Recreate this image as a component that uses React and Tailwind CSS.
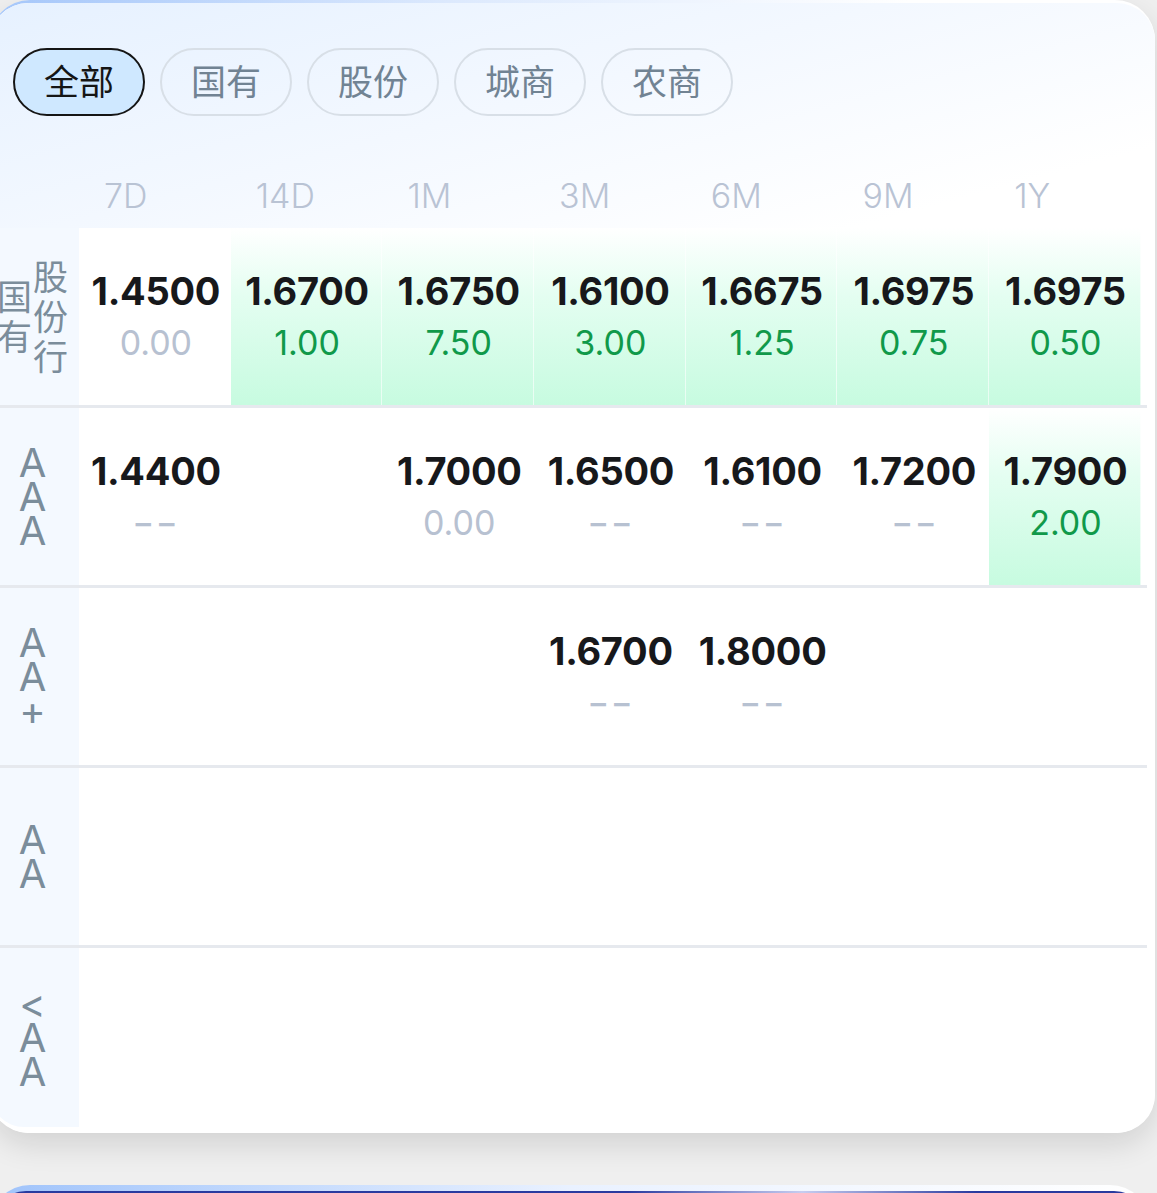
const tabs = ["全部", "国有", "股份", "城商", "农商"];
const periods = ["7D", "14D", "1M", "3M", "6M", "9M", "1Y"];

const rows = [
  {
    label: [["国", "有"], ["股", "份", "行"]],
    cells: [
      { v: "1.4500", d: "0.00" },
      { v: "1.6700", d: "1.00", up: true },
      { v: "1.6750", d: "7.50", up: true },
      { v: "1.6100", d: "3.00", up: true },
      { v: "1.6675", d: "1.25", up: true },
      { v: "1.6975", d: "0.75", up: true },
      { v: "1.6975", d: "0.50", up: true },
    ],
  },
  {
    label: [["A", "A", "A"]],
    cells: [
      { v: "1.4400", d: "--" },
      null,
      { v: "1.7000", d: "0.00" },
      { v: "1.6500", d: "--" },
      { v: "1.6100", d: "--" },
      { v: "1.7200", d: "--" },
      { v: "1.7900", d: "2.00", up: true },
    ],
  },
  {
    label: [["A", "A", "+"]],
    cells: [null, null, null, { v: "1.6700", d: "--" }, { v: "1.8000", d: "--" }, null, null],
  },
  { label: [["A", "A"]], cells: [null, null, null, null, null, null, null] },
  { label: [["<", "A", "A"]], cells: [null, null, null, null, null, null, null] },
];

const cjk = { fontFamily: "Inter, 'Noto Sans CJK SC', sans-serif" };

function RowLabel({ cols, last }) {
  const isCjk = cols.length > 1;
  return (
    <div
      className={
        "flex items-center justify-center bg-[#f4f9ff] pr-[4px] text-[#7b8d9b] " +
        (last ? "rounded-bl-[34px]" : "")
      }
    >
      {cols.map((chars, i) => (
        <div key={i} className="flex w-[36px] flex-col items-center">
          {chars.map((c, j) =>
            isCjk ? (
              <span key={j} className="text-[35px] leading-[40px]" style={cjk}>
                {c}
              </span>
            ) : (
              <span key={j} className="text-[40px] leading-[34px]">
                {c}
              </span>
            )
          )}
        </div>
      ))}
    </div>
  );
}

function Cell({ cell }) {
  if (!cell) return <div />;
  const empty = cell.d === "--";
  const dim = empty || cell.d === "0.00";
  return (
    <div
      className={
        "flex flex-col items-center justify-center pl-[2px] " +
        (cell.up
          ? "border-r border-white/60 bg-[linear-gradient(180deg,#ffffff_0%,#e4fef1_38%,#c7fbe0_100%)]"
          : "")
      }
    >
      <div className="text-[38px] font-bold leading-[48px] tracking-[-0.3px] text-[#17181b]">
        {cell.v}
      </div>
      <div
        className={
          "mt-[4px] text-[34px] leading-[48px] " +
          (dim ? "text-[#b7c1d1]" : "text-[#10994a]")
        }
      >
        {empty ? (
          <span className="inline-block scale-x-[1.4] font-medium tracking-[1px]">--</span>
        ) : (
          cell.d
        )}
      </div>
    </div>
  );
}

const grid = "grid grid-cols-[89px_repeat(7,151.7px)_1fr]";

export default function App() {
  return (
    <div className="min-h-screen overflow-hidden bg-[#efefef]" style={{ fontFamily: "Inter, 'Noto Sans CJK SC', sans-serif" }}>
      <div className="-ml-[10px] w-[1165px] rounded-[40px] bg-[linear-gradient(135deg,#a4c6fa_0%,#dce9fd_20%,#ffffff_40%)] pt-[3px] shadow-[0_12px_30px_rgba(0,0,0,0.12)]">
        <div className="overflow-hidden rounded-[38px] bg-white pb-[6px] pr-[8px]">
          <div className="-mr-[8px] bg-[linear-gradient(165deg,#e6f1ff_0%,#f3f8ff_45%,#ffffff_85%)] pr-[8px]">
            <div className="flex gap-[15px] pl-[23px] pt-[45px]">
              {tabs.map((t, i) => (
                <div
                  key={t}
                  className={
                    "flex h-[68px] w-[132px] items-center justify-center rounded-full text-[35px] " +
                    (i === 0
                      ? "border-[2.5px] border-[#151515] bg-[#cfe8ff] text-[#151515]"
                      : "border-[2px] border-[#d8dfe7] text-[#718393]")
                  }
                  style={cjk}
                >
                  {t}
                </div>
              ))}
            </div>
            <div className={grid + " mt-[60px] box-content h-[40px] pb-[12px]"}>
              <div />
              {periods.map((p) => (
                <div key={p} className="pl-[25px] text-[34px] font-light leading-[40px] text-[#b9c3d4]">
                  {p}
                </div>
              ))}
              <div />
            </div>
          </div>
          {rows.map((r, i) => {
            const last = i === rows.length - 1;
            return (
              <div
                key={i}
                className={
                  grid + " " +
                  (last ? "h-[179px]" : "h-[180px] border-b-[3px] border-[#e6e9ee]")
                }
              >
                <RowLabel cols={r.label} last={last} />
                {r.cells.map((c, j) => (
                  <Cell key={j} cell={c} />
                ))}
                <div />
              </div>
            );
          })}
        </div>
      </div>
      <div className="-ml-[10px] mt-[52px] w-[1160px] rounded-[40px] bg-[linear-gradient(90deg,#9fc3fb_0%,#e9f1ff_50%,#ffffff_100%)] pt-[6px]">
        <div className="h-[300px] rounded-[36px] bg-[linear-gradient(90deg,#2a3a9e_0%,#2b3b9f_55%,#c7cdf0_70%,#2a3a9e_85%)]" />
      </div>
    </div>
  );
}
